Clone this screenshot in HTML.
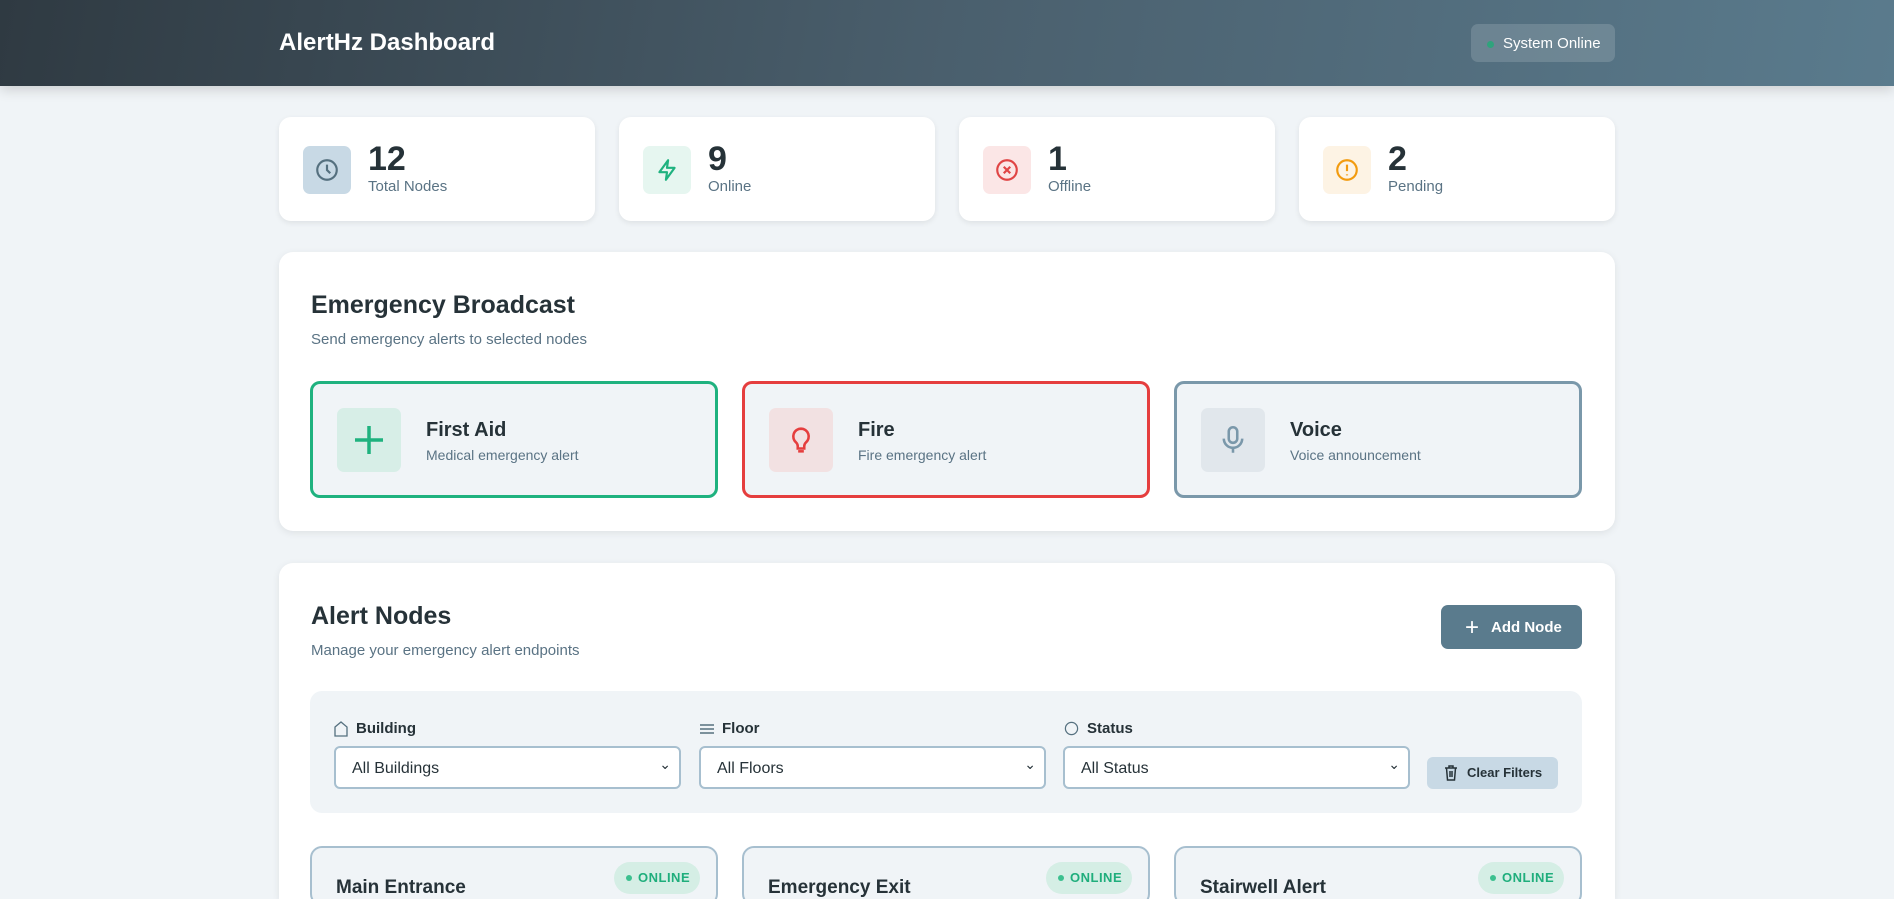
<!DOCTYPE html>
<html style="width:1894px;height:899px;overflow:hidden"><head><meta charset="utf-8"><style>
*{box-sizing:border-box;margin:0;padding:0}
body{width:1894px;height:899px;overflow:hidden;position:relative;background:#f0f4f7;font-family:"Liberation Sans",sans-serif;color:#263238}
.hdr{height:86px;background:linear-gradient(100deg,#2f3a42 0%,#4a5f6d 50%,#5a7b8d 100%);box-shadow:0 4px 12px rgba(0,0,0,.15);position:relative}
.hdr h1{position:absolute;left:279px;top:29px;font-size:24px;color:#fff;font-weight:bold}
.sys{position:absolute;left:1471px;top:24px;width:144px;height:38px;border-radius:7px;background:rgba(255,255,255,.15);color:#fff;font-size:15px;line-height:40px;padding-left:32px}
.sys:before{content:"";position:absolute;left:16px;top:17px;width:7px;height:7px;border-radius:50%;background:#2fa37c}
.c{position:absolute;left:279px;width:1336px}
.stats{top:117px;display:flex;gap:24px}
.st{flex:1;height:104px;background:#fff;border-radius:12px;box-shadow:0 2px 6px rgba(0,0,0,.08);position:relative}
.st .ic{position:absolute;left:24px;top:29px;width:48px;height:48px;border-radius:7px;display:flex;align-items:center;justify-content:center}
.st b{position:absolute;left:89px;top:23px;font-size:34px}
.st span{position:absolute;left:89px;top:61px;font-size:15px;color:#5a7384}
.panel{background:#fff;border-radius:14px;box-shadow:0 2px 8px rgba(0,0,0,.08);padding:0 32px}
.panel h2{font-size:25px;position:absolute;left:32px}
.panel p.s{font-size:15px;color:#5a7384;position:absolute;left:32px}
.bb{position:absolute;top:129px;width:408px;height:117px;border:3px solid;border-radius:10px;background:#f0f4f7}
.bb .ic{position:absolute;left:24px;top:24px;width:64px;height:64px;border-radius:7px;display:flex;align-items:center;justify-content:center}
.bb b{position:absolute;left:113px;top:35px;font-size:20px}
.bb span{position:absolute;left:113px;top:63px;font-size:14px;color:#5a7384}
.filt{position:absolute;left:31px;top:128px;width:1272px;height:122px;background:#f0f4f7;border-radius:12px}
.fl{position:absolute;top:28px;font-size:15px;font-weight:bold;display:flex;align-items:center;gap:8px}
.sel{position:absolute;top:55px;width:347px;height:43px;background:#fff;border:2px solid #a7bfcf;border-radius:6px;font-size:16px;line-height:41px;padding-left:16px}
.sel:after{content:"⌄";position:absolute;right:8px;top:-4px;font-size:14px}
.node{position:absolute;top:283px;width:408px;height:100px;border:2px solid #a7bfcf;border-radius:12px;background:#f0f4f7}
.node b{position:absolute;left:24px;top:29px;font-size:19px}
.badge{position:absolute;right:16px;top:14px;height:32px;width:86px;border-radius:16px;background:#d5eee5;color:#1fae7c;font-size:13px;font-weight:bold;line-height:32px;padding-left:24px;letter-spacing:.5px}
.badge:before{content:"";position:absolute;left:12px;top:13px;width:6px;height:6px;border-radius:50%;background:#3cc08f}
</style></head><body>
<div class="hdr"><h1>AlertHz Dashboard</h1><div class="sys">System Online</div></div>
<div class="c stats">
<div class="st"><div class="ic" style="background:#c8d9e5"><svg width="26" height="26" viewBox="0 0 24 24" fill="none" stroke="#55707f" stroke-width="2"><circle cx="12" cy="12" r="9"/><path d="M12 7v5l3 3"/></svg></div><b>12</b><span>Total Nodes</span></div>
<div class="st"><div class="ic" style="background:#e6f6f0"><svg width="26" height="26" viewBox="0 0 24 24" fill="none" stroke="#1fb27f" stroke-width="2" stroke-linejoin="round"><path d="M13 3L5 14h7l-1 7 8-11h-7z"/></svg></div><b>9</b><span>Online</span></div>
<div class="st"><div class="ic" style="background:#fbe6e6"><svg width="26" height="26" viewBox="0 0 24 24" fill="none" stroke="#e04545" stroke-width="2"><circle cx="12" cy="12" r="9"/><path d="M9 9l6 6M15 9l-6 6"/></svg></div><b>1</b><span>Offline</span></div>
<div class="st"><div class="ic" style="background:#fdf3e4"><svg width="26" height="26" viewBox="0 0 24 24" fill="none" stroke="#f29b0f" stroke-width="2"><circle cx="12" cy="12" r="9"/><path d="M12 7v6M12 16v1"/></svg></div><b>2</b><span>Pending</span></div>
</div>
<div class="c panel" style="top:252px;height:279px">
<h2 style="top:39px">Emergency Broadcast</h2>
<p class="s" style="top:79px">Send emergency alerts to selected nodes</p>
<div class="bb" style="left:31px;border-color:#1fb27f"><div class="ic" style="background:#d7eee7"><svg width="36" height="36" viewBox="0 0 36 36" stroke="#1fb27f" stroke-width="3.5"><path d="M18 4v28M4 18h28"/></svg></div><b>First Aid</b><span>Medical emergency alert</span></div>
<div class="bb" style="left:463px;border-color:#e53e3e"><div class="ic" style="background:#f2e1e2"><svg width="34" height="34" viewBox="0 0 24 24" fill="none" stroke="#e53e3e" stroke-width="1.8"><path d="M12 4a5.5 5.5 0 0 0-3.5 9.7c.8.8 1.2 1.6 1.2 2.6V18h4.6v-1.7c0-1 .4-1.8 1.2-2.6A5.5 5.5 0 0 0 12 4z"/><path d="M10 20h4"/></svg></div><b>Fire</b><span>Fire emergency alert</span></div>
<div class="bb" style="left:895px;border-color:#7a98aa"><div class="ic" style="background:#e1e7ec"><svg width="34" height="34" viewBox="0 0 24 24" fill="none" stroke="#7a98aa" stroke-width="1.8"><rect x="9" y="3" width="6" height="11" rx="3"/><path d="M5.5 11a6.5 6.5 0 0 0 13 0M12 17.5V21"/></svg></div><b>Voice</b><span>Voice announcement</span></div>
</div>
<div class="c panel" style="top:563px;height:336px;border-radius:14px 14px 0 0;overflow:hidden">
<h2 style="top:39px">Alert Nodes</h2>
<p class="s" style="top:79px">Manage your emergency alert endpoints</p>
<div style="position:absolute;left:1162px;top:42px;width:141px;height:44px;border-radius:7px;background:#5a7b8d;color:#fff;font-size:15px;font-weight:bold;line-height:46px;padding-left:50px">Add Node<span style="position:absolute;left:24px;top:0px;font-size:24px;font-weight:normal">+</span></div>
<div class="filt">
<div class="fl" style="left:24px;top:29px"><svg width="14" height="16" viewBox="0 0 14 16" fill="none" stroke="#55707f" stroke-width="1.3"><path d="M1 6l6-5 6 5v9H1z"/></svg>Building</div>
<div class="fl" style="left:390px;top:29px"><svg width="14" height="12" viewBox="0 0 14 12" stroke="#55707f" stroke-width="1.5"><path d="M0 2h14M0 6h14M0 10h14"/></svg>Floor</div>
<div class="fl" style="left:754px;top:29px"><svg width="15" height="15" viewBox="0 0 16 16" fill="none" stroke="#55707f" stroke-width="1.3"><circle cx="8" cy="8" r="6.5"/></svg>Status</div>
<div class="sel" style="left:24px">All Buildings</div>
<div class="sel" style="left:389px">All Floors</div>
<div class="sel" style="left:753px">All Status</div>
<div style="position:absolute;left:1117px;top:66px;width:131px;height:32px;border-radius:6px;background:#c8d9e5;font-size:13px;font-weight:bold;line-height:32px;padding-left:40px">Clear Filters<svg style="position:absolute;left:17px;top:8px" width="14" height="16" viewBox="0 0 14 16" fill="none" stroke="#263238" stroke-width="1.5"><path d="M1 3h12M5 3V1h4v2M2.5 3l1 12h7l1-12M6 6v6M8 6v6"/></svg></div>
</div>
<div class="node" style="left:31px;height:60px"><b>Main Entrance</b><div class="badge">ONLINE</div></div>
<div class="node" style="left:463px;height:60px"><b>Emergency Exit</b><div class="badge">ONLINE</div></div>
<div class="node" style="left:895px;height:60px"><b>Stairwell Alert</b><div class="badge">ONLINE</div></div>
</div>
</body></html>
